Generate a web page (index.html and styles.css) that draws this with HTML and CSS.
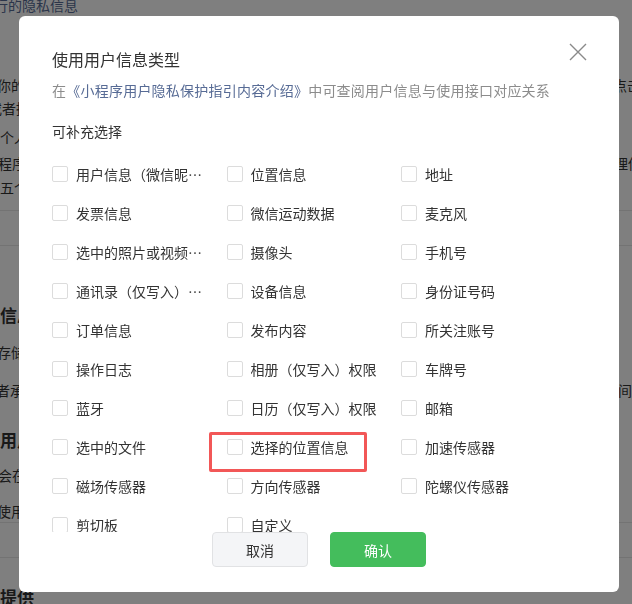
FILE: index.html
```html
<!DOCTYPE html>
<html lang="zh-CN">
<head>
<meta charset="utf-8">
<title>使用用户信息类型</title>
<link rel="stylesheet" href="styles.css">
</head>
<body>
<div class="page">
  <div class="bg-link">行的隐私信息</div>
  <div class="bg-row r1"><span class="lt s3">你的用户信息</span><span class="rt rt-a">点击</span></div>
  <div class="bg-row r2"><span class="lt s12">或者授权</span></div>
  <div class="bg-row r3"><span class="lt">个人信息</span></div>
  <div class="bg-row r4"><span class="lt s2">程序将</span><span class="rt rt-b">理你</span></div>
  <div class="bg-row r5"><span class="lt">五个</span></div>
  <div class="bg-line l1"></div>
  <div class="bg-line l2"></div>
  <div class="bg-head h1">信息</div>
  <div class="bg-row r6"><span class="lt s3">存储</span></div>
  <div class="bg-row r7"><span class="lt s4">者承诺</span><span class="rt">间</span></div>
  <div class="bg-head h2">用户</div>
  <div class="bg-row r8"><span class="lt s2">会在</span></div>
  <div class="bg-row r9"><span class="lt s3">使用</span></div>
  <div class="bg-line l3"></div>
  <div class="bg-line l4"></div>
  <div class="bg-head h3">提供</div>
</div>

<div class="mask"></div>

<div class="dialog">
  <button class="close" aria-label="关闭">
    <svg width="18" height="18" viewBox="0 0 18 18"><path d="M1 1L17 17M17 1L1 17" stroke="#8a8a8a" stroke-width="1.4" fill="none"/></svg>
  </button>
  <div class="dialog-head">
    <div class="title">使用用户信息类型</div>
    <div class="desc">在<a class="link">《小程序用户隐私保护指引内容介绍》</a>中可查阅用户信息与使用接口对应关系</div>
    <div class="section">可补充选择</div>
  </div>
  <div class="dialog-body">
    <div class="grid">
      <label class="opt"><span class="box"></span><span class="txt">用户信息（微信昵称、头像）</span></label>
      <label class="opt"><span class="box"></span><span class="txt">位置信息</span></label>
      <label class="opt"><span class="box"></span><span class="txt">地址</span></label>

      <label class="opt"><span class="box"></span><span class="txt">发票信息</span></label>
      <label class="opt"><span class="box"></span><span class="txt">微信运动数据</span></label>
      <label class="opt"><span class="box"></span><span class="txt">麦克风</span></label>

      <label class="opt"><span class="box"></span><span class="txt">选中的照片或视频信息</span></label>
      <label class="opt"><span class="box"></span><span class="txt">摄像头</span></label>
      <label class="opt"><span class="box"></span><span class="txt">手机号</span></label>

      <label class="opt"><span class="box"></span><span class="txt">通讯录（仅写入）权限</span></label>
      <label class="opt"><span class="box"></span><span class="txt">设备信息</span></label>
      <label class="opt"><span class="box"></span><span class="txt">身份证号码</span></label>

      <label class="opt"><span class="box"></span><span class="txt">订单信息</span></label>
      <label class="opt"><span class="box"></span><span class="txt">发布内容</span></label>
      <label class="opt"><span class="box"></span><span class="txt">所关注账号</span></label>

      <label class="opt"><span class="box"></span><span class="txt">操作日志</span></label>
      <label class="opt"><span class="box"></span><span class="txt">相册（仅写入）权限</span></label>
      <label class="opt"><span class="box"></span><span class="txt">车牌号</span></label>

      <label class="opt"><span class="box"></span><span class="txt">蓝牙</span></label>
      <label class="opt"><span class="box"></span><span class="txt">日历（仅写入）权限</span></label>
      <label class="opt"><span class="box"></span><span class="txt">邮箱</span></label>

      <label class="opt"><span class="box"></span><span class="txt">选中的文件</span></label>
      <label class="opt"><span class="box"></span><span class="txt">选择的位置信息</span><span class="mark"></span></label>
      <label class="opt"><span class="box"></span><span class="txt">加速传感器</span></label>

      <label class="opt"><span class="box"></span><span class="txt">磁场传感器</span></label>
      <label class="opt"><span class="box"></span><span class="txt">方向传感器</span></label>
      <label class="opt"><span class="box"></span><span class="txt">陀螺仪传感器</span></label>

      <label class="opt"><span class="box"></span><span class="txt">剪切板</span></label>
      <label class="opt"><span class="box"></span><span class="txt">自定义</span></label>
    </div>
  </div>
  <div class="dialog-foot">
    <button class="btn btn-cancel">取消</button>
    <button class="btn btn-ok">确认</button>
  </div>
</div>
</body>
</html>
```

FILE: styles.css
```css
* { box-sizing: border-box; }

html, body {
  margin: 0;
  padding: 0;
  height: 100%;
  overflow: hidden;
}

body {
  font-family: "Noto Sans CJK SC", "Noto Sans", sans-serif;
  font-size: 14px;
  color: #333;
  background: #fff;
}

/* background page */
.page {
  width: 632px;
}

.bg-link {
  margin-top: -3px;
  margin-left: -6px;
  line-height: 16px;
  height: 16px;
  color: #576b95;
  font-size: 14px;
}

.bg-row {
  display: flex;
  justify-content: space-between;
  height: 22px;
  line-height: 22px;
  white-space: nowrap;
  color: #333;
}

.bg-row .lt.s2 { margin-left: -2px; }
.bg-row .lt.s3 { margin-left: -3px; }
.bg-row .lt.s4 { margin-left: -4px; }
.bg-row .lt.s12 { margin-left: -12px; }
.bg-row .rt-a { margin-right: -9px; }
.bg-row .rt-b { margin-right: -10px; }

.r1 { margin-top: 61px; }
.r2 { margin-top: 1px; }
.r3 { margin-top: 7px; }
.r4 { margin-top: 4px; }
.r5 { margin-top: 2px; }
.r6 { margin-top: 14px; }
.r7 { margin-top: 16px; }
.r8 { margin-top: 12px; }
.r9 { margin-top: 14px; }

.bg-line {
  height: 1px;
  background: #e6e6e6;
}
.l1 { margin-top: 12px; }
.l2 { margin-top: 34px; }
.l3 { margin-top: 0; }
.l4 { margin-top: 34px; }

.bg-head {
  height: 24px;
  line-height: 24px;
  font-size: 17px;
  font-weight: 700;
  color: #333;
}
.h1 { margin-top: 57px; }
.h2 { margin-top: 27px; }
.h3 { margin-top: 27px; }

/* mask */
.mask {
  position: fixed;
  inset: 0;
  background: rgba(0, 0, 0, 0.5);
}

/* dialog */
.dialog {
  position: fixed;
  left: 19px;
  top: 16px;
  width: 600px;
  height: 576px;
  background: #fff;
  border-radius: 6px;
  display: flex;
  flex-direction: column;
  overflow: hidden;
}

.close {
  position: absolute;
  top: 27px;
  right: 32px;
  width: 18px;
  height: 18px;
  padding: 0;
  border: 0;
  background: none;
  display: flex;
}

.dialog-head {
  padding: 31px 33px 0;
}

.title {
  font-size: 16px;
  line-height: 24px;
  color: #333;
}

.desc {
  margin-top: 9px;
  font-size: 14px;
  line-height: 20px;
  letter-spacing: 0.23px;
  color: #8c8c8c;
  white-space: nowrap;
}

.link {
  color: #576b95;
  text-decoration: none;
}

.section {
  margin-top: 21px;
  font-size: 14px;
  line-height: 20px;
  color: #333;
}

.dialog-body {
  flex: 1;
  min-height: 0;
  overflow: hidden;
  margin-top: 13px;
  padding-left: 33px;
}

.grid {
  display: grid;
  grid-template-columns: 174.5px 174.5px 174.5px;
  grid-auto-rows: 39px;
}

.opt {
  position: relative;
  display: flex;
  align-items: center;
  height: 39px;
}

.box {
  flex: none;
  width: 16px;
  height: 16px;
  border: 1px solid #dcdcdc;
  border-radius: 2px;
  background: #fff;
  margin-right: 8px;
}

.txt {
  max-width: 130px;
  font-size: 14px;
  line-height: 20px;
  color: #333;
  white-space: nowrap;
  overflow: hidden;
  text-overflow: ellipsis;
}

.mark {
  position: absolute;
  left: -18px;
  top: 5px;
  width: 158px;
  height: 40px;
  border: 3px solid #f25757;
  border-radius: 2px;
}

.dialog-foot {
  display: flex;
  justify-content: center;
  gap: 22px;
  padding-bottom: 25px;
}

.btn {
  width: 96px;
  height: 35px;
  border-radius: 4px;
  font-family: inherit;
  font-size: 14px;
  padding: 0;
}

.btn-cancel {
  background: #f4f5f7;
  border: 1px solid #e1e2e4;
  color: #333;
}

.btn-ok {
  background: #44bd5c;
  border: 1px solid #44bd5c;
  color: #fff;
}
```
